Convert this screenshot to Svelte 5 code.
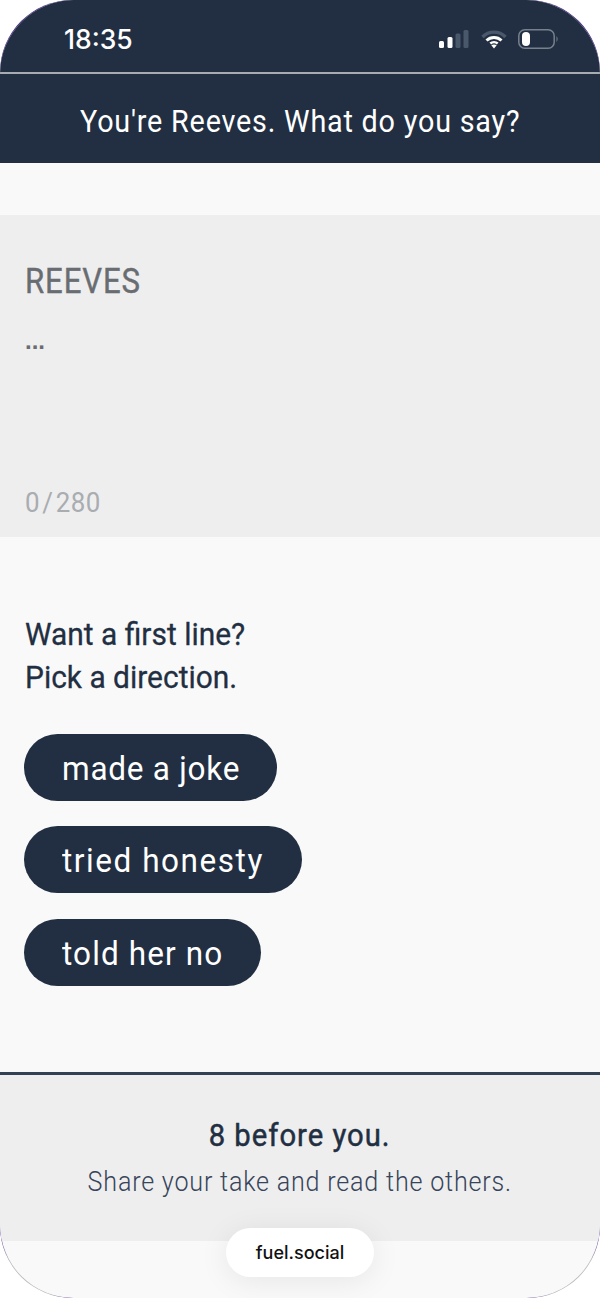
<script>
  const directions = ["made a joke", "tried honesty", "told her no"];
</script>

<div class="phone">
  <div class="screen">
    <header class="top">
      <div class="status">
        <span class="time">18:35</span>
        <div class="indicators">
          <svg width="30" height="19" viewBox="0 0 30 19">
            <rect x="0" y="11" width="5" height="7" rx="1.5" fill="#fff" />
            <rect x="8.5" y="7" width="5" height="11" rx="1.5" fill="#fff" />
            <rect x="16.5" y="3.5" width="5" height="14.5" rx="1.5" fill="#4a586b" />
            <rect x="24.5" y="0" width="5" height="18" rx="1.5" fill="#4a586b" />
          </svg>
          <svg width="26" height="19" viewBox="0 0 26 19">
            <path d="M1.5 7 A16 16 0 0 1 24.5 7" fill="none" stroke="#4a586b" stroke-width="3.4" />
            <path d="M5.5 10.5 A11 11 0 0 1 20.5 10.5" fill="none" stroke="#fff" stroke-width="3" />
            <path d="M9.3 13.6 A5.6 5.6 0 0 1 16.7 13.6" fill="none" stroke="#fff" stroke-width="2.6" />
            <path d="M10.3 15.2 L13 18.5 L15.7 15.2 Q13 13.8 10.3 15.2 Z" fill="#fff" />
          </svg>
          <svg width="41" height="20" viewBox="0 0 41 20">
            <rect x="0.8" y="0.8" width="35.4" height="18.4" rx="6" fill="none" stroke="#77818e" stroke-width="1.5" />
            <rect x="4" y="3" width="8" height="14" rx="4" fill="#fff" />
            <path d="M38.5 7 Q40.8 10 38.5 13 Z" fill="#77818e" />
          </svg>
        </div>
      </div>
      <h1><span>You're Reeves. What do you say?</span></h1>
    </header>

    <section class="compose">
      <h2><span>REEVES</span></h2>
      <p class="dots">...</p>
      <p class="count"><span>0 / 280</span></p>
    </section>

    <section class="prompt">
      <p><span>Want a first line?<br />Pick a direction.</span></p>
      <div class="choices">
        {#each directions as label}
          <button><span>{label}</span></button>
        {/each}
      </div>
    </section>

    <section class="teaser">
      <strong>8 before you.</strong>
      <em>Share your take and read the others.</em>
    </section>
  </div>
  <div class="badge">fuel.social</div>
</div>

<style>
  :global(body) {
    margin: 0;
    background: #fff;
  }

  .phone {
    position: relative;
    width: 600px;
    height: 1298px;
    border-radius: 72px;
    background: linear-gradient(
      #4a2a8c 0 90px,
      #f9f9f9 110px,
      #f9f9f9 1180px,
      #4a2a8c 1225px,
      #7a5aa0 1245px,
      #bdbdbd 1262px,
      #bdbdbd 1294px,
      #6a4a9a 1298px
    );
    font-family: Roboto, "Liberation Sans", sans-serif;
    overflow: hidden;
  }

  /* slightly rounder than the frame, so the frame colour shows in the corners only */
  .screen {
    height: 100%;
    border-radius: 74px;
    overflow: hidden;
    background: #f9f9f9;
    display: flex;
    flex-direction: column;
  }

  h1 span,
  h2 span,
  .count span,
  .prompt p span,
  button span {
    display: inline-block;
    transform-origin: left center;
  }

  .top {
    background: #222f42;
    color: #fff;
    height: 163px;
    flex: none;
  }

  .status {
    height: 74px;
    box-sizing: border-box;
    border-bottom: 2px solid #a7acb3;
    display: flex;
    align-items: center;
    justify-content: space-between;
    padding: 6px 41px 0 64px;
  }

  .time {
    font-family: Inter, sans-serif;
    font-size: 26.5px;
    font-weight: 500;
  }

  .indicators {
    display: flex;
    align-items: center;
    gap: 11.5px;
  }

  h1 {
    margin: 0;
    height: 89px;
    line-height: 95px;
    font-size: 32px;
    font-weight: 400;
    text-align: center;
    letter-spacing: 0.9px;
  }

  h1 span {
    transform: scaleX(0.898);
    transform-origin: center;
  }

  .compose {
    flex: none;
    margin-top: 52px;
    height: 322px;
    background: #eeeeee;
    padding: 0 25px;
    box-sizing: border-box;
    color: #696d72;
    display: flex;
    flex-direction: column;
  }

  h2 {
    margin: 48px 0 0;
    font-size: 35px;
    line-height: 38px;
    font-weight: 400;
    letter-spacing: 1px;
    -webkit-text-stroke: 0.4px #696d72;
  }

  h2 span {
    transform: scaleX(0.89);
  }

  .dots {
    margin: 25px 0 0;
    font-family: "Liberation Sans", sans-serif;
    font-size: 24px;
    line-height: 30px;
    font-weight: 700;
  }

  .count {
    margin: auto 0 18px;
    font-size: 28px;
    line-height: 32px;
    color: #a9acb0;
    word-spacing: -5px;
    letter-spacing: 0.5px;
  }

  .count span {
    transform: scaleX(0.925);
  }

  .prompt {
    flex: 1;
    padding: 76px 24px 0;
    color: #222f42;
    border-bottom: 3px solid #334154;
  }

  .prompt p {
    margin: 0;
    font-size: 32px;
    line-height: 43px;
    padding-left: 1px;
    -webkit-text-stroke: 0.3px #222f42;
  }

  .prompt p span {
    transform: scaleX(0.935);
  }

  .choices {
    display: flex;
    flex-direction: column;
    align-items: flex-start;
    gap: 25px;
    margin-top: 35px;
  }

  button {
    height: 67px;
    padding: 0 0 0 38px;
    border: 0;
    border-radius: 34px;
    background: #222f42;
    color: #fff;
    font: 400 34px Roboto, sans-serif;
    letter-spacing: 0.8px;
    text-align: left;
    white-space: nowrap;
  }

  button span {
    transform: scaleX(0.927);
  }

  button:nth-child(1) {
    width: 253px;
  }

  button:nth-child(2) {
    width: 278px;
    letter-spacing: 1.66px;
  }

  button:nth-child(3) {
    width: 237px;
    letter-spacing: 1.2px;
    margin-top: 1px;
  }

  .teaser {
    flex: none;
    height: 166px;
    margin-bottom: 57px;
    background: #eeeeee;
    display: flex;
    flex-direction: column;
    align-items: center;
    color: #222f42;
  }

  .teaser strong {
    margin-top: 42px;
    font-size: 32px;
    line-height: 36px;
    font-weight: 400;
    letter-spacing: 1.1px;
    -webkit-text-stroke: 0.5px #222f42;
    transform: scaleX(0.913);
  }

  .teaser em {
    margin-top: 13px;
    font-style: normal;
    font-size: 28px;
    line-height: 32px;
    font-weight: 300;
    letter-spacing: 0.9px;
    white-space: nowrap;
    color: #37445a;
    transform: scaleX(0.896);
  }

  .badge {
    position: absolute;
    left: 226px;
    top: 1228px;
    width: 148px;
    height: 49px;
    border-radius: 25px;
    background: #fff;
    box-shadow: 0 4px 30px rgba(0, 0, 0, 0.08);
    font: 500 18px/49px Inter, sans-serif;
    color: #111;
    text-align: center;
  }
</style>
